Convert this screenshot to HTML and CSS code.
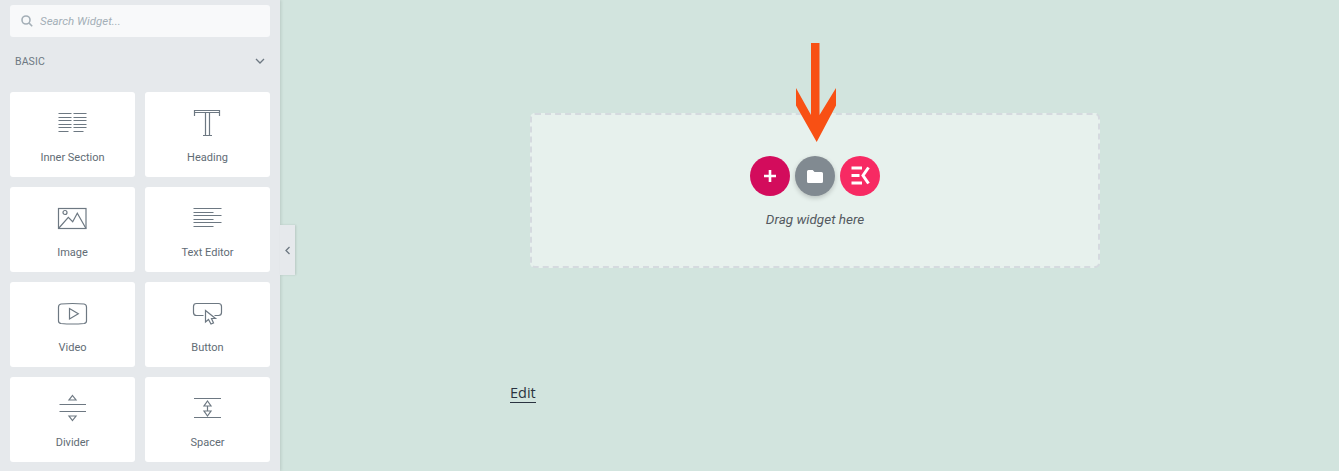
FILE: index.html
```html
<!DOCTYPE html>
<html lang="en">
<head>
  <meta charset="UTF-8">
  <title>Elementor | Edit</title>
  <link rel="stylesheet" href="styles.css">
</head>
<body>
  <div class="page">
    <aside class="panel">
      <div class="search">
        <svg class="search-icon" width="12" height="12" viewBox="0 0 12 12"><circle cx="5" cy="5" r="4" /><path d="M8 8l3.2 3.2" /></svg>
        <input type="text" placeholder="Search Widget...">
      </div>
      <div class="category">
        <span>Basic</span>
        <svg width="10" height="6" viewBox="0 0 10 6"><path d="M1 1l4 4 4-4" /></svg>
      </div>
      <div class="widgets">
        <div class="widget">
          <svg class="widget-icon" viewBox="0 0 31 30"><path d="M1.5 6.5h13M1.5 10.5h13M1.5 13.5h13M1.5 17.5h13M1.5 20.5h13M1.5 24.5h10M16.5 6.5h13M16.5 10.5h13M16.5 13.5h13M16.5 17.5h13M16.5 20.5h13M16.5 24.5h10" /></svg>
          <span>Inner Section</span>
        </div>
        <div class="widget">
          <svg class="widget-icon" viewBox="0 0 31 30"><path d="M2.5 9V3.5h25V9M2.5 5.5h25M13.5 5.5v23M17.5 5.5v23M11 28.5h9" /></svg>
          <span>Heading</span>
        </div>
        <div class="widget">
          <svg class="widget-icon" viewBox="0 0 31 30"><rect x="1.5" y="6.5" width="27.5" height="20" /><circle cx="8" cy="10.5" r="2" /><path d="M1.5 26.5l9.8-11.2 4.4 4.4 4.6-8.4 8.7 15.2" /></svg>
          <span>Image</span>
        </div>
        <div class="widget">
          <svg class="widget-icon" viewBox="0 0 31 30"><path d="M1.5 6.5h28M1.5 10.5h20M1.5 13.5h28M1.5 17.5h20M1.5 20.5h28M1.5 24.5h20" /></svg>
          <span>Text Editor</span>
        </div>
        <div class="widget">
          <svg class="widget-icon" viewBox="0 0 31 30"><path d="M4 7q11.5-1 23 0q2.5.5 2.5 3v14q0 2-2.5 2.5q-11.5 1-23 0q-2.5-.5-2.5-2.5V10q0-2.5 2.5-3z" /><path d="M12.5 11.5V22l8.8-5.2z" /></svg>
          <span>Video</span>
        </div>
        <div class="widget">
          <svg class="widget-icon" viewBox="0 0 31 30"><path d="M11.5 18.5H4.5q-3 0-3-3v-6q0-3 3-3h22q3 0 3 3v6q0 3-3 3h-4" /><path d="M13.5 13.5V25l3-2.5 2.5 4.5 2.5-1-2-4.500h4z" /></svg>
          <span>Button</span>
        </div>
        <div class="widget">
          <svg class="widget-icon" viewBox="0 0 31 30"><path d="M2.5 12.5H29M2.5 19.5H29M15.5 3.5l3.5 4.500h-7zM15.500 28.500l3.500-4.500h-7z" /></svg>
          <span>Divider</span>
        </div>
        <div class="widget">
          <svg class="widget-icon" viewBox="0 0 31 30"><path d="M2 6.5h27M2 25.5h27M15.5 9l3.5 5h-7zM15.5 24l3.5-5h-7zM15.5 14v5" /></svg>
          <span>Spacer</span>
        </div>
      </div>
      <div class="panel-toggle">
        <svg width="6" height="9" viewBox="0 0 6 9"><path d="M4.5 1L1 4.5 4.5 8" /></svg>
      </div>
    </aside>

    <main class="canvas">
      <section class="drop-area">
        <div class="drop-buttons">
          <button class="round-btn add-btn">
            <svg width="14" height="14" viewBox="0 0 14 14"><path d="M7 1v12M1 7h12" /></svg>
          </button>
          <button class="round-btn template-btn">
            <svg width="16" height="13" viewBox="0 0 16 13"><path d="M1.5 0h4.2l1.8 2h7Q16 2 16 3.5v8Q16 13 14.5 13h-13Q0 13 0 11.5v-10Q0 0 1.5 0z" /></svg>
          </button>
          <button class="round-btn kit-btn">
            <svg width="40" height="40" viewBox="0 0 40 40"><path d="M11.5 12H22M11.5 19.5h8M11.5 27H22M28.5 11.500l-5.500 8 5.500 8" /></svg>
          </button>
        </div>
        <p class="drop-text">Drag widget here</p>
      </section>
      <a class="edit-link" href="#">Edit</a>
      <svg class="arrow" width="42" height="102" viewBox="0 0 42 102"><path d="M16 1h8.500v72l16.500-27v17.500L21.700 100 1 63.500V46l15 27z" /></svg>
    </main>
  </div>
</body>
</html>
```

FILE: styles.css
```css
* {
  box-sizing: border-box;
}
html, body {
  margin: 0;
  height: 100%;
  overflow: hidden;
}
body {
  font-family: Roboto, "Liberation Sans", sans-serif;
  background-color: #d2e4de;
}
.page {
  display: flex;
  height: 471px;
}

/* left panel */
.panel {
  position: relative;
  width: 280px;
  flex-shrink: 0;
  padding: 5px 10px 0;
  background-color: #e6e9ec;
  box-shadow: 1px 0 3px rgba(0, 0, 0, 0.12);
}
.search {
  display: flex;
  align-items: center;
  gap: 7px;
  height: 32px;
  padding-left: 11px;
  background-color: #f8f9fa;
  border-radius: 3px;
}
.search-icon {
  fill: none;
  stroke: #a4afb7;
  stroke-width: 1.6;
}
.search input {
  flex: 1;
  min-width: 0;
  border: none;
  outline: none;
  background: none;
  padding: 0;
  font-family: Roboto, sans-serif;
  font-size: 11.5px;
  font-style: italic;
}
.search input::placeholder {
  color: #a4afb7;
  opacity: 1;
}
.category {
  display: flex;
  justify-content: space-between;
  align-items: center;
  height: 48px;
  padding: 0 5px;
  margin-bottom: 7px;
  font-size: 10.5px;
  letter-spacing: 0.1px;
  color: #6d7882;
  text-transform: uppercase;
}
.category svg {
  fill: none;
  stroke: #6d7882;
  stroke-width: 1.3;
}
.widgets {
  display: grid;
  grid-template-columns: 125px 125px;
  grid-auto-rows: 85px;
  gap: 10px;
}
.widget {
  display: flex;
  flex-direction: column;
  align-items: center;
  padding-top: 15px;
  background-color: #fff;
  border-radius: 3px;
  font-size: 11px;
  color: #616c75;
}
.widget-icon {
  display: block;
  width: 31px;
  height: 30px;
  margin-bottom: 4px;
  fill: none;
  stroke: #6d7882;
  stroke-width: 1.2;
}
.widget span {
  line-height: 16px;
  margin-top: 9px;
}
.panel-toggle {
  position: absolute;
  top: 225px;
  left: 280px;
  display: flex;
  align-items: center;
  justify-content: center;
  width: 15px;
  height: 50px;
  background-color: #e6e9ec;
  box-shadow: 1px 0 2px rgba(0, 0, 0, 0.12);
}
.panel-toggle svg {
  fill: none;
  stroke: #6d7882;
  stroke-width: 1.3;
}

/* canvas */
.canvas {
  position: relative;
  flex: 1;
  padding: 113px 0 0 250px;
}
.drop-area {
  display: flex;
  flex-direction: column;
  align-items: center;
  width: 570px;
  height: 155px;
  padding-top: 41px;
  background-color: #e7f1ed;
  border: 2px dashed #d5dadf;
  border-radius: 5px;
}
.drop-buttons {
  display: flex;
  gap: 5px;
}
.round-btn {
  display: flex;
  align-items: center;
  justify-content: center;
  width: 40px;
  height: 40px;
  padding: 0;
  border: none;
  border-radius: 50%;
}
.add-btn {
  background-color: #d30c5c;
}
.add-btn svg {
  fill: none;
  stroke: #fff;
  stroke-width: 2.6;
}
.template-btn {
  background-color: #818a91;
  box-shadow: 0 2px 5px rgba(0, 0, 0, 0.2);
}
.template-btn svg {
  fill: #fff;
}
.kit-btn {
  background-color: #f72a63;
}
.kit-btn svg {
  fill: none;
  stroke: #fff;
  stroke-width: 3;
}
.drop-text {
  margin: 15px 0 0;
  font-size: 13.5px;
  font-style: italic;
  line-height: 16px;
  color: #54595f;
}
.edit-link {
  position: absolute;
  top: 383px;
  left: 230px;
  font-family: "Open Sans", sans-serif;
  font-size: 14.5px;
  line-height: 19px;
  color: #2a3340;
  text-decoration: none;
  border-bottom: 1px solid #2a3340;
}
.arrow {
  position: absolute;
  top: 42px;
  left: 515px;
  fill: #f85014;
}
```
